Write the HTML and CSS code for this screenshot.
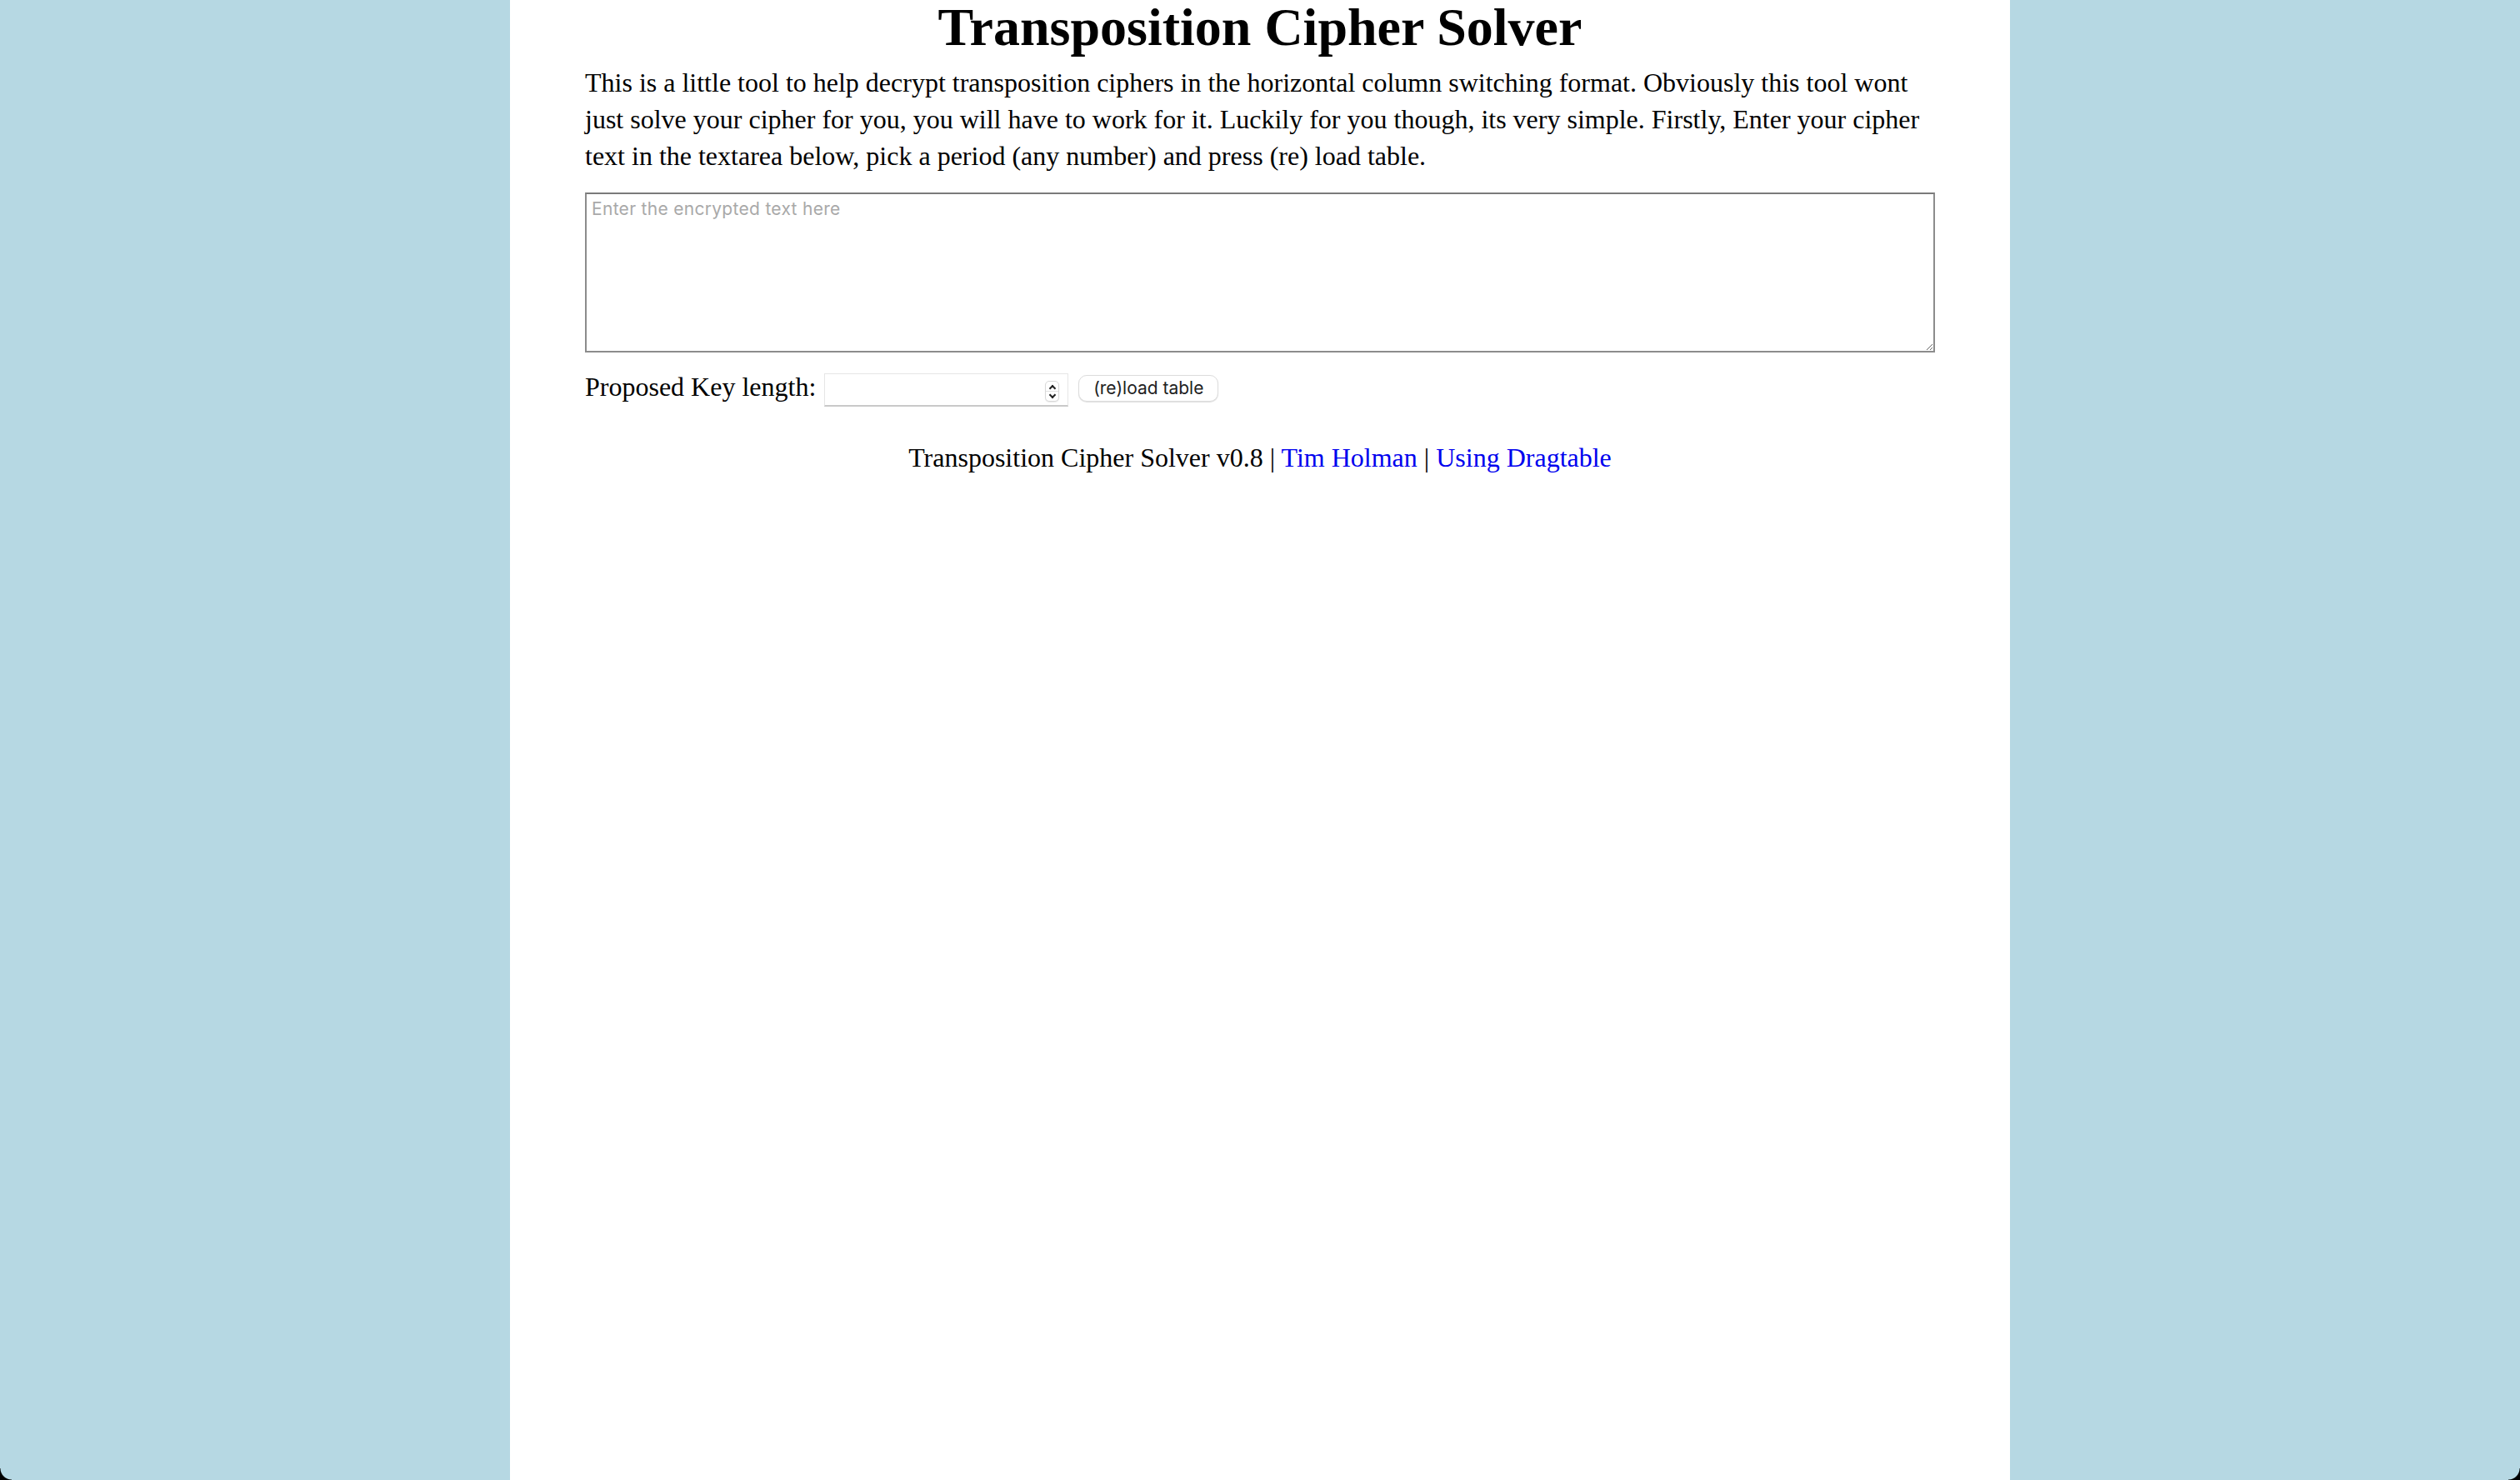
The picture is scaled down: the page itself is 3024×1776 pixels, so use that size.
FILE: index.html
```html
<!DOCTYPE html>
<html lang="en">
<head>
<meta charset="utf-8">
<title>Transposition Cipher Solver</title>
<link rel="stylesheet" href="styles.css">
</head>
<body>
<div class="page">
  <h1 class="title">Transposition Cipher Solver</h1>
  <p class="intro">This is a little tool to help decrypt transposition ciphers in the horizontal column switching format. Obviously this tool wont just solve your cipher for you, you will have to work for it. Luckily for you though, its very simple. Firstly, Enter your cipher text in the textarea below, pick a period (any number) and press (re) load table.</p>
  <textarea class="cipher" placeholder="Enter the encrypted text here"></textarea>
  <div class="controls">
    <label class="key-label" for="keylen">Proposed Key length:</label>
    <span class="num-wrap">
      <input class="num" id="keylen" type="number">
      <span class="spinner"><span class="chev up"></span><span class="chev down"></span></span>
    </span>
    <button class="reload" type="button">(re)load table</button>
  </div>
  <p class="footer">Transposition Cipher Solver v0.8 | <a href="#">Tim Holman</a> | <a href="#">Using Dragtable</a></p>
</div>
<div class="corner corner-left"></div>
<div class="corner corner-right"></div>
</body>
</html>
```
FILE: styles.css
```css
html, body {
  margin: 0;
  padding: 0;
  height: 100%;
}
body {
  background: #b6d8e3;
  font-family: "Liberation Serif", "Times New Roman", serif;
  color: #000;
}
.page {
  width: 1800px;
  min-height: 100vh;
  margin: 0 auto;
  background: #fff;
  box-sizing: border-box;
  padding: 0 90px;
  overflow: hidden;
}
.title {
  margin: 0;
  font-size: 64px;
  line-height: 66px;
  font-weight: bold;
  text-align: center;
}
.intro {
  margin: 11px 0 0;
  font-size: 32px;
  line-height: 44px;
}
.cipher {
  display: block;
  width: 100%;
  height: 192px;
  margin: 22px 0 0;
  box-sizing: border-box;
  border: 2px solid #8c8c8c;
  border-top-color: #7a7a7a;
  padding: 5px 6px;
  font-family: Inter, "Liberation Sans", sans-serif;
  font-size: 21px;
  letter-spacing: 0.3px;
  background: #fff;
  resize: vertical;
}
.cipher::placeholder {
  color: #a9a9a9;
}
.controls {
  display: flex;
  align-items: flex-start;
  margin-top: 21px;
}
.key-label {
  font-size: 32px;
  line-height: 40px;
  margin-right: 10px;
}
.num-wrap {
  position: relative;
  display: block;
  margin-top: 4px;
}
.num {
  display: block;
  width: 293px;
  height: 40px;
  box-sizing: border-box;
  border: 1px solid #e6e6e6;
  border-bottom: 2px solid #c9c9c9;
  padding: 0 6px;
  font-size: 22px;
  background: #fff;
  outline: none;
  -moz-appearance: textfield;
}
.num::-webkit-inner-spin-button,
.num::-webkit-outer-spin-button {
  -webkit-appearance: none;
  margin: 0;
}
.spinner {
  position: absolute;
  left: 265px;
  top: 9px;
  width: 17px;
  height: 25px;
  box-sizing: border-box;
  border: 1px solid #d8d8d8;
  border-radius: 5px;
  background: #fff;
  display: flex;
  flex-direction: column;
  box-shadow: 0 1px 1px rgba(0,0,0,0.08);
}
.chev {
  flex: 1;
  position: relative;
}
.chev.up {
  border-bottom: 1px solid #e2e2e2;
}
.chev::before {
  content: "";
  position: absolute;
  left: 5px;
  width: 4px;
  height: 4px;
  border-left: 2px solid #222;
  border-top: 2px solid #222;
}
.chev.up::before {
  top: 5px;
  transform: rotate(45deg);
}
.chev.down::before {
  top: 1px;
  transform: rotate(225deg);
}
.reload {
  margin: 6px 0 0 12px;
  width: 168px;
  height: 32px;
  box-sizing: border-box;
  border: 1px solid #dcdcdc;
  border-radius: 10px;
  background: #fff;
  box-shadow: 0 1px 1px rgba(0,0,0,0.12);
  font-family: Inter, "Liberation Sans", sans-serif;
  font-size: 21px;
  color: #222;
  padding: 0;
  line-height: 30px;
}
.footer {
  margin: 39px 0 0;
  font-size: 32px;
  line-height: 44px;
  text-align: center;
}
.footer a {
  color: #0000ee;
  text-decoration: none;
}
.corner {
  position: fixed;
  bottom: 0;
  width: 14px;
  height: 14px;
}
.corner-left {
  left: 0;
  background: radial-gradient(circle at 100% 0, transparent 13px, #000 14px);
}
.corner-right {
  right: 0;
  background: radial-gradient(circle at 0 0, transparent 13px, #000 14px);
}
```
